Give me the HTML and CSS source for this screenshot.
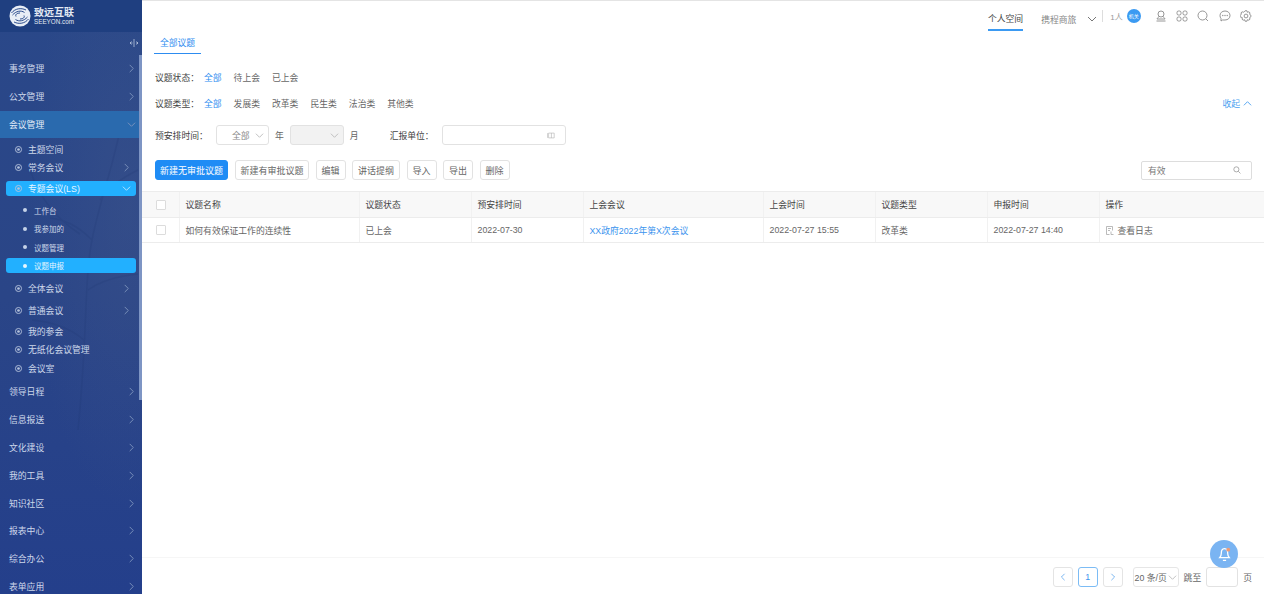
FILE: index.html
```html
<!DOCTYPE html>
<html lang="zh-CN">

<head>
    <meta charset="UTF-8">
    <title>议题申报</title>
    <link rel="stylesheet" href="styles.css">
</head>

<body>
    <svg class="defs" width="0" height="0">
        <symbol id="right" viewBox="0 0 10 10"><path d="M3 1l4 4-4 4" fill="none" stroke="currentColor" stroke-width="1"/></symbol>
        <symbol id="left" viewBox="0 0 10 10"><path d="M7 1L3 5l4 4" fill="none" stroke="currentColor" stroke-width="1"/></symbol>
        <symbol id="down" viewBox="0 0 10 10"><path d="M1 3l4 4 4-4" fill="none" stroke="currentColor" stroke-width="1"/></symbol>
        <symbol id="dot" viewBox="0 0 10 10"><circle cx="5" cy="5" r="3.4" fill="none" stroke="currentColor"/><circle cx="5" cy="5" r="1.5" fill="currentColor"/></symbol>
    </svg>

    <div class="app">
        <aside class="side">
            <svg class="side-trees" viewBox="0 0 142 300">
                <path d="M120 0c-8 40-20 70-28 110s-4 90-14 190M100 70c10-14 22-22 38-30M92 110C78 96 66 90 50 88M88 160c14-10 30-14 50-16M84 210c-14-12-30-18-52-20M30 40c10 30 28 50 50 64" fill="none" stroke="#1d356f" stroke-width="1.500"/>
            </svg>
            <div class="logo">
                <svg class="logo-mark" viewBox="0 0 22 22">
                    <circle cx="11" cy="11" r="10.500" fill="#e8eef6"/>
                    <path d="M2.500 8C6 3.500 12 2.500 17 5M3.500 10C7 6 12 5 15.500 7.500M7 11.500c-1-2 1-3.500 4-3.500M19.500 14C16 18.500 10 19.500 5 17M18.500 12C15 16 10 17 6.500 14.500M15 10.500c1 2-1 3.500-4 3.500" fill="none" stroke="#2a4b8c" stroke-width="1"/>
                </svg>
                <div class="logo-text">
                    <b>致远互联</b>
                    <span>SEEYON.com</span>
                </div>
            </div>
            <div class="side-toggle">
                <svg width="10" height="10" viewBox="0 0 10 10"><path d="M5 1v8M1 5h2.500M7 5h2M2.500 3.500L1 5l1.500 1.500M7.500 3.500L9 5 7.500 6.500" fill="none" stroke="#b9c6de" stroke-width=".8"/></svg>
            </div>
            <nav class="menu">
                <a class="m1">事务管理<svg class="arrow"><use href="#right"/></svg></a>
                <a class="m1">公文管理<svg class="arrow"><use href="#right"/></svg></a>
                <a class="m1 open">会议管理<svg class="arrow"><use href="#down"/></svg></a>
                <div class="subs">
                    <a class="m2 short"><svg class="dot"><use href="#dot"/></svg>主题空间</a>
                    <a class="m2 short"><svg class="dot"><use href="#dot"/></svg>常务会议<svg class="arrow"><use href="#right"/></svg></a>
                    <a class="m2 pill first"><svg class="dot"><use href="#dot"/></svg>专题会议(LS)<svg class="arrow"><use href="#down"/></svg></a>
                    <a class="m3"><i></i>工作台</a>
                    <a class="m3"><i></i>我参加的</a>
                    <a class="m3"><i></i>议题管理</a>
                    <a class="m3 pill"><i></i>议题申报</a>
                    <a class="m2 tall"><svg class="dot"><use href="#dot"/></svg>全体会议<svg class="arrow"><use href="#right"/></svg></a>
                    <a class="m2 tall"><svg class="dot"><use href="#dot"/></svg>普通会议<svg class="arrow"><use href="#right"/></svg></a>
                    <a class="m2 short"><svg class="dot"><use href="#dot"/></svg>我的参会</a>
                    <a class="m2 short"><svg class="dot"><use href="#dot"/></svg>无纸化会议管理</a>
                    <a class="m2 short"><svg class="dot"><use href="#dot"/></svg>会议室</a>
                </div>
                <a class="m1">领导日程<svg class="arrow"><use href="#right"/></svg></a>
                <a class="m1">信息报送<svg class="arrow"><use href="#right"/></svg></a>
                <a class="m1">文化建设<svg class="arrow"><use href="#right"/></svg></a>
                <a class="m1">我的工具<svg class="arrow"><use href="#right"/></svg></a>
                <a class="m1">知识社区<svg class="arrow"><use href="#right"/></svg></a>
                <a class="m1">报表中心<svg class="arrow"><use href="#right"/></svg></a>
                <a class="m1">综合办公<svg class="arrow"><use href="#right"/></svg></a>
                <a class="m1">表单应用<svg class="arrow"><use href="#right"/></svg></a>
            </nav>
            <div class="side-scroll"></div>
        </aside>

        <main class="main">
            <header class="topbar">
                <a class="top-tab">个人空间</a>
                <a class="top-link">携程商旅</a>
                <svg class="top-down"><use href="#down"/></svg>
                <span class="top-sep"></span>
                <span class="top-count">1人</span>
                <span class="top-badge">机关</span>
                <div class="top-icons">
                    <svg viewBox="0 0 12 12"><circle cx="6" cy="4" r="3"/><path d="M4.500 6.500C3 7 2.500 8 2 9h8c-.5-1-1-2-2.500-2.500M1.500 11h9"/></svg>
                    <svg viewBox="0 0 12 12"><rect x="1" y="1" width="4" height="4" rx="1.500"/><rect x="7" y="1" width="4" height="4" rx="1.500"/><rect x="1" y="7" width="4" height="4" rx="1.500"/><rect x="7" y="7" width="4" height="4" rx="1.500"/></svg>
                    <svg viewBox="0 0 12 12"><circle cx="5.500" cy="5.500" r="4.500"/><path d="M8.800 8.800L11 11"/></svg>
                    <svg viewBox="0 0 12 12"><path d="M6 1c3 0 5 2 5 4.500S9 10 6 10H3.500L2 11V8.500C1.300 7.700 1 6.700 1 5.500 1 3 3 1 6 1z"/><path class="chat-dots" d="M3.800 5.500h.01M6 5.500h.01M8.200 5.500h.01"/></svg>
                    <svg viewBox="0 0 12 12"><path d="M5 .8h2l.4 1.500 1.400-.5 1.200 1-.4 1.500 1.300.9v1.600l-1.300.9.400 1.500-1.200 1-1.400-.5L7 11.200H5l-.4-1.500-1.400.5-1.200-1 .4-1.500L.1 6.800V5.200l1.300-.9L1 2.800l1.200-1 1.400.5z"/><circle cx="6" cy="6" r="1.900"/></svg>
                </div>
            </header>

            <div class="tabs"><a class="tab">全部议题</a></div>

            <div class="filter-row first-row">
                <label class="f-label">议题状态：</label>
                <a class="f-opt on">全部</a><a class="f-opt">待上会</a><a class="f-opt">已上会</a>
            </div>
            <div class="filter-row">
                <label class="f-label">议题类型：</label>
                <a class="f-opt on">全部</a><a class="f-opt">发展类</a><a class="f-opt">改革类</a><a class="f-opt">民生类</a><a class="f-opt">法治类</a><a class="f-opt">其他类</a>
                <a class="collapse">收起<svg viewBox="0 0 10 10"><path d="M1 7l4-4 4 4" fill="none" stroke="currentColor"/></svg></a>
            </div>

            <div class="date-row">
                <label class="d-label">预安排时间：</label>
                <div class="select year">全部<svg><use href="#down"/></svg></div>
                <span class="unit">年</span>
                <div class="select month"><svg><use href="#down"/></svg></div>
                <span class="unit">月</span>
                <label class="d-label unit-label">汇报单位：</label>
                <div class="unit-input">
                    <svg viewBox="0 0 10 8"><path d="M.5 1v6M2 1h7v6H2zM5.500 1v6" fill="none" stroke="#aaa" stroke-width=".7"/></svg>
                </div>
            </div>

            <div class="tools">
                <button class="btn primary">新建无审批议题</button>
                <button class="btn wide">新建有审批议题</button>
                <button class="btn">编辑</button>
                <button class="btn">讲话提纲</button>
                <button class="btn">导入</button>
                <button class="btn">导出</button>
                <button class="btn">删除</button>
                <div class="search">有效
                    <svg viewBox="0 0 10 10"><circle cx="4.200" cy="4.200" r="3.200" fill="none" stroke="#999"/><path d="M6.600 6.600L9.300 9.300" stroke="#999"/></svg>
                </div>
            </div>

            <table class="grid">
                <colgroup>
                    <col class="c-check"><col class="c-name"><col class="c-md"><col class="c-md"><col class="c-name"><col class="c-md"><col class="c-md"><col class="c-md"><col>
                </colgroup>
                <thead>
                    <tr>
                        <th class="check"><span class="box"></span></th>
                        <th>议题名称</th>
                        <th>议题状态</th>
                        <th>预安排时间</th>
                        <th>上会会议</th>
                        <th>上会时间</th>
                        <th>议题类型</th>
                        <th>申报时间</th>
                        <th>操作</th>
                    </tr>
                </thead>
                <tbody>
                    <tr>
                        <td class="check"><span class="box"></span></td>
                        <td>如何有效保证工作的连续性</td>
                        <td>已上会</td>
                        <td>2022-07-30</td>
                        <td><a class="link">XX政府2022年第X次会议</a></td>
                        <td>2022-07-27 15:55</td>
                        <td>改革类</td>
                        <td>2022-07-27 14:40</td>
                        <td>
                            <svg class="log-icon" viewBox="0 0 8 9"><path d="M.5.500h6v4M.5.500v8h3M2 2.500h3M2 4.500h2M5 5.500v3h2.500" fill="none" stroke="#aaa" stroke-width=".8"/></svg>查看日志
                        </td>
                    </tr>
                </tbody>
            </table>

            <footer class="pager">
                <a class="pg"><svg><use href="#left"/></svg></a>
                <a class="pg cur">1</a>
                <a class="pg"><svg><use href="#right"/></svg></a>
                <div class="pg-size">20 条/页<svg><use href="#down"/></svg></div>
                <span class="pg-txt">跳至</span>
                <span class="pg-input"></span>
                <span class="pg-txt">页</span>
            </footer>

            <div class="bell">
                <svg viewBox="0 0 14 14"><path d="M7 1.500C4.500 1.500 4 3.500 4 6c0 2-.7 3-1.500 4h9C10.700 9 10 8 10 6c0-2.500-.5-4.500-3-4.500zM5.500 12.500h3" fill="none" stroke="#fff" stroke-width="1.200"/><circle cx="10.500" cy="2.500" r="1.800" fill="#ee9a74"/></svg>
            </div>
        </main>
    </div>
</body>

</html>
```

FILE: styles.css
```css
* {
    margin: 0;
    padding: 0;
    box-sizing: border-box;
}

body {
    font-family: "Liberation Sans", "Noto Sans CJK SC", sans-serif;
    font-size: 8.800px;
    color: #666;
    background-color: #fff;
    overflow: hidden;
}

.defs {
    position: absolute;
}

.app {
    display: flex;
    width: 100%;
    height: 100vh;
    overflow: hidden;
}

/* sidebar */
.side {
    position: relative;
    flex: 0 0 142px;
    color: #cdd7ea;
    overflow: hidden;
    background:
        radial-gradient(ellipse at 90% 35%, rgba(70, 90, 140, .35), transparent 55%),
        linear-gradient(180deg, #2a4889 0%, #2a4587 50%, #243f8b 100%);
}

.side-trees {
    position: absolute;
    left: 0;
    top: 130px;
    width: 142px;
    height: 300px;
    opacity: .18;
}

.logo {
    position: relative;
    display: flex;
    align-items: center;
    gap: 3px;
    height: 32px;
    padding-left: 9px;
    background-color: #1f3f80;
}

.logo-mark {
    width: 22px;
    height: 22px;
}

.logo-text {
    display: flex;
    flex-direction: column;
    color: #e3e9f3;
}

.logo-text b {
    font-family: "Liberation Serif", "Noto Sans CJK SC", serif;
    font-size: 10px;
    line-height: 11px;
}

.logo-text span {
    font-size: 6.300px;
    line-height: 7px;
}

.side-toggle {
    position: relative;
    display: flex;
    justify-content: flex-end;
    height: 23px;
    padding: 6px 3px 0 0;
}

.menu {
    position: relative;
    display: flex;
    flex-direction: column;
}

.menu a {
    display: flex;
    align-items: center;
}

.arrow {
    width: 9px;
    height: 9px;
    margin-left: auto;
    color: #7f95bd;
}

.m1 {
    flex: 0 0 27.800px;
    padding: 0 6px 0 9px;
}

.m1.open {
    background-color: #2a6aae;
    color: #e3ecf7;
}

.subs {
    padding: 2px 0 .5px;
}

.dot {
    width: 9px;
    height: 9px;
    margin-right: 5px;
    color: #b5c3dc;
    flex: none;
}

.m2 {
    height: 18.400px;
    padding: 0 11px 0 14px;
}

.m2.tall {
    height: 22px;
}

.tall + .short {
    margin-top: 1px;
}

.m3 {
    height: 18.400px;
    padding: 0 12px 0 34px;
    font-size: 7.500px;
    position: relative;
}

.m3 i {
    position: absolute;
    left: 23px;
    top: 50%;
    width: 4px;
    height: 4px;
    margin-top: -2px;
    border-radius: 50%;
    background-color: #c5d2e8;
}

.pill {
    height: 15px;
    margin: 2px 6px 4px;
    padding-left: 8px;
    padding-right: 5px;
    border-radius: 3px;
    background-color: #22b0ff;
    color: #e6f6ff;
}

.pill .arrow {
    color: #bfe6ff;
}

.m3.pill {
    padding-left: 28px;
}

.m3.pill i {
    left: 17px;
    background-color: #e6f6ff;
}

.m2.first {
    margin-top: 4px;
    margin-bottom: 5px;
}

.side-scroll {
    position: absolute;
    right: 0;
    top: 55px;
    width: 3px;
    height: 345px;
    background-color: #7e95c4;
}

/* main */
.main {
    position: relative;
    flex: 1;
    display: flex;
    flex-direction: column;
    min-width: 0;
    border-top: 1px solid #e4e4e4;
}

.topbar {
    display: flex;
    align-items: center;
    justify-content: flex-end;
    height: 30px;
    padding-right: 12px;
    color: #888;
}

.top-tab {
    height: 30px;
    line-height: 36px;
    color: #444;
    border-bottom: 2px solid #3b9af2;
    margin-right: 18px;
}

.top-link {
    margin-top: 6px;
}

.top-down {
    width: 10px;
    height: 10px;
    margin: 6px 5px 0 11px;
    color: #777;
}

.top-sep {
    width: 1px;
    height: 12px;
    margin-right: 7px;
    background-color: #ddd;
}

.top-count {
    font-size: 8px;
    color: #999;
    margin-right: 4px;
}

.top-badge {
    width: 14px;
    height: 14px;
    margin-right: 14px;
    border-radius: 50%;
    background-color: #3b9af2;
    color: #fff;
    font-size: 5px;
    line-height: 14px;
    text-align: center;
}

.top-icons {
    display: flex;
    gap: 9.300px;
}

.top-icons svg {
    width: 12px;
    height: 12px;
    fill: none;
    stroke: #8a8a8a;
    stroke-width: .9;
}

.top-icons .chat-dots {
    stroke-width: 1.300;
    stroke-linecap: round;
}

.tabs {
    display: flex;
    height: 23px;
    padding-left: 12px;
}

.tab {
    width: 47px;
    padding-top: 5px;
    text-align: center;
    color: #2d8cf0;
    border-bottom: 1px solid #2d8cf0;
}

.filter-row {
    display: flex;
    align-items: center;
    height: 26px;
    padding: 0 12px 0 13px;
}

.first-row {
    margin-top: 10px;
}

.f-label {
    width: 49px;
    color: #444;
}

.f-opt {
    margin-right: 12px;
}

.f-opt.on {
    color: #2d8cf0;
}

.collapse {
    display: flex;
    align-items: center;
    gap: 3px;
    margin-left: auto;
    color: #4a9ff0;
}

.collapse svg {
    width: 9px;
    height: 9px;
}

.date-row {
    display: flex;
    align-items: center;
    height: 20px;
    margin-top: 9px;
    padding-left: 13px;
}

.d-label {
    color: #444;
}

.d-label:first-child {
    width: 61px;
}

.unit-label {
    width: 52px;
    margin-left: 25px;
}

.select {
    position: relative;
    display: flex;
    align-items: center;
    height: 20px;
    padding-left: 15px;
    border: 1px solid #e2e2e2;
    border-radius: 3px;
    color: #888;
}

.select svg {
    position: absolute;
    right: 4px;
    top: 5px;
    width: 9px;
    height: 9px;
    color: #bbb;
}

.year {
    width: 53px;
}

.month {
    width: 54px;
    background-color: #f2f2f2;
}

.unit {
    margin: 0 6px;
}

.unit-input {
    display: flex;
    align-items: center;
    justify-content: flex-end;
    width: 124px;
    height: 20px;
    padding-right: 10px;
    border: 1px solid #e2e2e2;
    border-radius: 3px;
}

.unit-input svg {
    width: 8px;
    height: 7px;
}

.tools {
    display: flex;
    align-items: center;
    height: 20px;
    margin-top: 15px;
    padding: 0 12px 0 13px;
}

.btn {
    height: 20px;
    padding: 0 5px;
    margin-right: 6.500px;
    border: 1px solid #e2e2e2;
    border-radius: 3px;
    background-color: #fff;
    color: #666;
    font: inherit;
    font-size: 9px;
    white-space: nowrap;
}

.btn.wide {
    width: 74px;
    padding: 0;
}

.btn.primary {
    width: 73px;
    padding: 0;
    margin-right: 7px;
    border-color: #1f8cf5;
    background-color: #1f8cf5;
    color: #fff;
}

.search {
    position: relative;
    display: flex;
    align-items: center;
    justify-content: space-between;
    width: 111px;
    height: 19px;
    margin-left: auto;
    padding: 0 10px 0 6px;
    border: 1px solid #ddd;
    border-radius: 2px;
    color: #777;
}

.search svg {
    width: 8px;
    height: 8px;
}

.grid {
    width: 100%;
    margin-top: 11px;
    border-collapse: collapse;
    table-layout: fixed;
}

.c-check {
    width: 37px;
}

.c-name {
    width: 180px;
}

.c-md {
    width: 112px;
}

.grid th,
.grid td {
    padding: 0 6px;
    text-align: left;
    font-weight: normal;
    border-top: 1px solid #ececec;
    border-bottom: 1px solid #ececec;
    border-left: 1px solid #f1f1f1;
    white-space: nowrap;
}

.grid th {
    height: 26px;
    background-color: #f8f8f8;
    color: #444;
}

.grid td {
    height: 25px;
}

.grid .check {
    padding-left: 14px;
    border-left: 0;
}

.box {
    display: block;
    width: 10px;
    height: 10px;
    border: 1px solid #dcdcdc;
    border-radius: 1px;
    background-color: #fff;
}

.link {
    color: #3b94ee;
}

.log-icon {
    width: 8px;
    height: 9px;
    margin-right: 4px;
    vertical-align: -1px;
}

.pager {
    display: flex;
    align-items: center;
    justify-content: flex-end;
    gap: 5px;
    height: 37px;
    margin-top: auto;
    padding: 2px 12px 0 0;
    border-top: 1px solid #f6f6f6;
}

.pg {
    display: flex;
    align-items: center;
    justify-content: center;
    width: 20px;
    height: 20px;
    border: 1px solid #e4e4e4;
    border-radius: 3px;
    color: #5ba5ee;
}

.pg svg {
    width: 8px;
    height: 8px;
}

.pg.cur {
    border-color: #7cbcf5;
    color: #3b94ee;
}

.pg-size {
    display: flex;
    align-items: center;
    justify-content: space-between;
    width: 46px;
    height: 20px;
    margin-left: 5px;
    padding-left: 1px;
    border: 1px solid #e6e6e6;
    border-radius: 3px;
}

.pg-size svg {
    width: 9px;
    height: 9px;
    margin-right: 1px;
    color: #bbb;
}

.pg-input {
    width: 32px;
    height: 20px;
    border: 1px solid #e2e2e2;
    border-radius: 3px;
}

.bell {
    position: absolute;
    right: 26px;
    bottom: 26px;
    display: flex;
    align-items: center;
    justify-content: center;
    width: 28px;
    height: 28px;
    border-radius: 50%;
    background-color: #7ab4f2;
}

.bell svg {
    width: 15px;
    height: 15px;
}
```
